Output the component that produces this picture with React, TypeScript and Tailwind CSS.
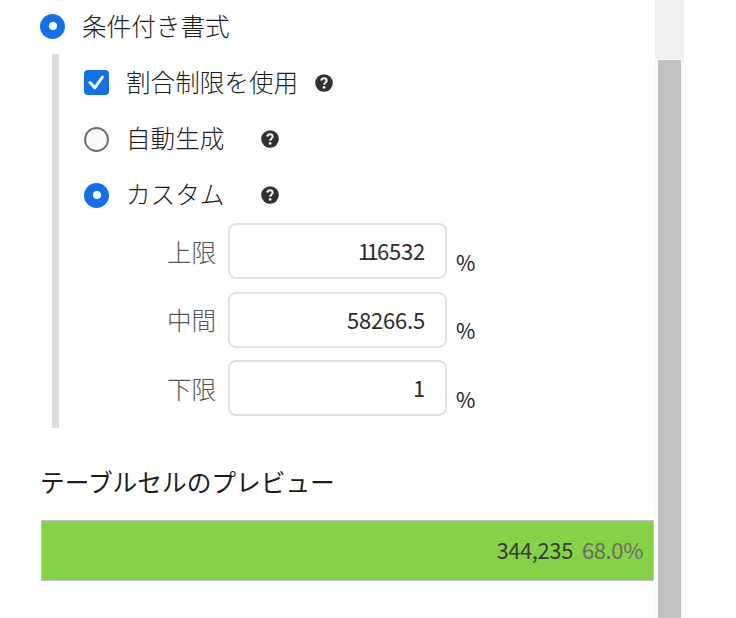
import React from 'react';

const Radio = ({ checked = false }: { checked?: boolean }) => (
  <span
    className={
      checked
        ? 'flex size-[25px] shrink-0 items-center justify-center rounded-full bg-[#1271e8]'
        : 'size-[25px] shrink-0 rounded-full border-[2.5px] border-[#707070] bg-[#fafafa]'
    }
  >
    {checked && <span className="size-[8px] rounded-full bg-white" />}
  </span>
);

const Help = () => (
  <svg viewBox="0 0 18 18" className="size-[18px] shrink-0">
    <circle cx="9" cy="9" r="8.8" fill="#303030" />
    <path
      d="M6.1 6.5C6.6 4.9 7.6 4.2 9 4.2c1.6 0 2.7.9 2.7 2.3 0 2-2.5 2-2.5 4.2"
      fill="none"
      stroke="#f0f0f0"
      strokeWidth="2.1"
    />
    <circle cx="9.1" cy="13.4" r="1.4" fill="#f0f0f0" />
  </svg>
);

const Limit = ({ label, children }: { label: string; children: React.ReactNode }) => (
  <div className="flex h-[56px] items-center">
    <span className="w-[61px] shrink-0 text-[#555]">{label}</span>
    <div className="flex h-[56px] w-[219px] items-center justify-end rounded-[8px] border-2 border-[#e2e2e2] pr-[20px] pb-[2px] text-[22px] font-normal text-[#2c2c2c]">
      <span className="tracking-[-0.2px]">{children}</span>
    </div>
    <span className="ml-[9px] mt-[22px] text-[21px] font-normal">%</span>
  </div>
);

export default function App() {
  return (
    <div className="flex h-[618px] w-[736px] overflow-hidden bg-white font-['Noto_Sans_CJK_JP',sans-serif] text-[24.6px] leading-none font-light whitespace-nowrap text-[#1c1c1c]">
      <main className="w-[655px] shrink-0 pl-[40px]">
        <div className="flex h-[54px] items-center gap-[17px] pb-[2px]">
          <Radio checked />
          <span className="pb-px">条件付き書式</span>
        </div>
        <section className="ml-[12px] h-[374px] border-l-[7px] border-[#dcdcdc] pl-[25px]">
          <div className="flex h-[57px] items-center">
            <span className="flex size-[25px] items-center justify-center rounded-[4px] bg-[#1271e8]">
              <svg viewBox="0 0 25 25" className="size-[25px]">
                <path d="M6 12.5l4.8 5.3L18.5 7" fill="none" stroke="#fff" strokeWidth="3" strokeLinecap="round" strokeLinejoin="round" />
              </svg>
            </span>
            <span className="ml-[17px] w-[189px] pb-[3px]">割合制限を使用</span>
            <Help />
          </div>
          <div className="flex h-[56px] items-center">
            <Radio />
            <span className="ml-[17px] w-[135px] pb-[3px]">自動生成</span>
            <Help />
          </div>
          <div className="flex h-[56px] items-center">
            <Radio checked />
            <span className="ml-[17px] w-[135px] pb-[3px]">カスタム</span>
            <Help />
          </div>
          <div className="flex flex-col gap-[12.5px] pl-[83px]">
            <Limit label="上限">
              <span className="tracking-[-3.6px]">1</span>
              <span className="tracking-[-1.8px]">1</span>6532
            </Limit>
            <Limit label="中間">58266.5</Limit>
            <Limit label="下限">1</Limit>
          </div>
        </section>
        <h2 className="mt-[41px] h-[27px] text-[24.7px] font-normal">テーブルセルのプレビュー</h2>
        <div className="ml-px mt-[24px] flex h-[61px] w-[613px] items-center justify-end gap-[9px] border border-[#c5bdd0] bg-[#86d246] pr-[10px] pb-[3px] text-[22px] font-normal tracking-[-0.4px]">
          <span className="text-[#3a3a3a]">344,235</span>
          <span className="text-[#6a6a6a]">68.0%</span>
        </div>
      </main>
      <div className="flex w-[29px] shrink-0 flex-col bg-[#f0f0f0]">
        <div className="mt-[59px] flex grow justify-center bg-[#fafafa]">
          <div className="mt-px w-[23px] bg-[#c1c1c1]" />
        </div>
      </div>
    </div>
  );
}
